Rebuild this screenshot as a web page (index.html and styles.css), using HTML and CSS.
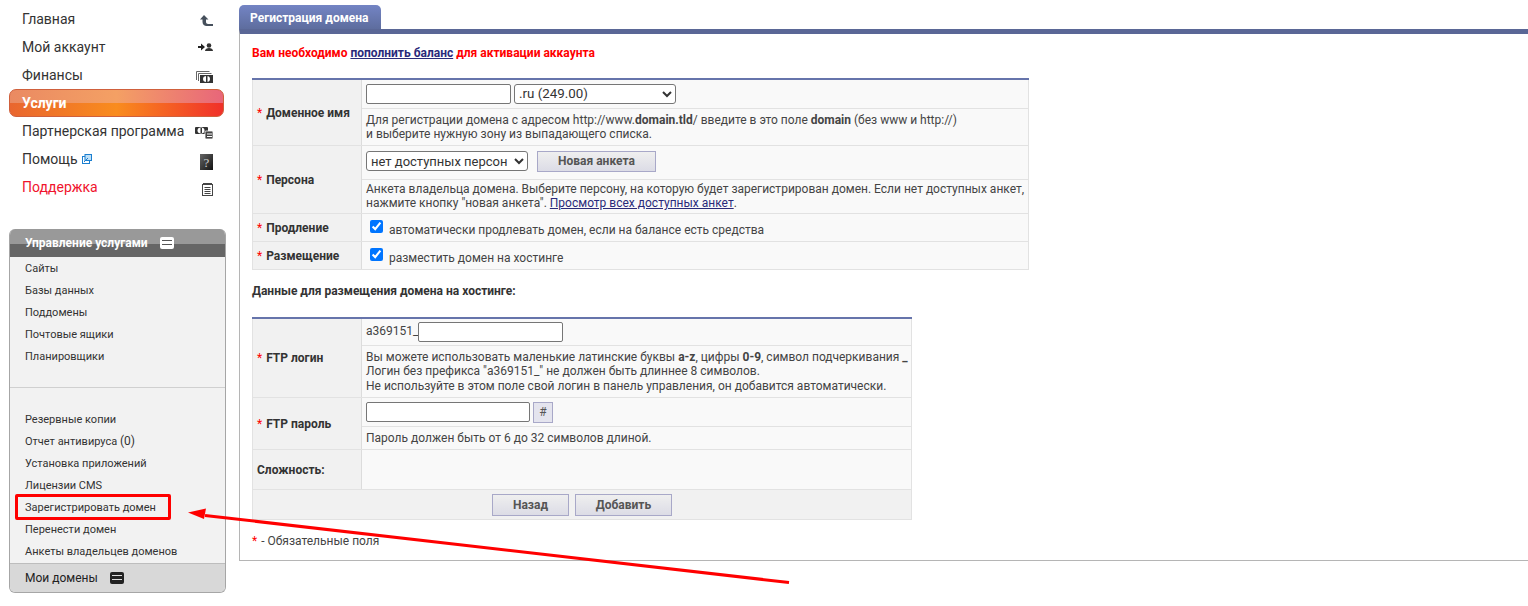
FILE: index.html
```html
<!DOCTYPE html>
<html lang="ru">
<head>
  <meta charset="UTF-8" />
  <title>Регистрация домена</title>
  <link rel="stylesheet" href="styles.css">
</head>
<body>
  <div class="page">
    <aside class="sidebar">
      <ul class="nav">
        <li class="nav-item"><a>Главная</a>
          <svg class="nav-icon icon-home" viewBox="0 0 13 11"><path d="M4 0 0 4.500h2.500V7c0 2.500 2 4 4 4H13V9H8C7 9 6 8 6 7V4.500h2.500z" fill="#46505c"/></svg></li>
        <li class="nav-item"><a>Мой аккаунт</a>
          <svg class="nav-icon icon-account" viewBox="0 0 15 8"><path d="M0 3h3V.5L7 4 3 7.500V5H0z" fill="#222"/><circle cx="11" cy="2.500" r="2.300" fill="#333"/><path d="M7 8c0-2 2-3 4-3s4 1 4 3z" fill="#333"/></svg></li>
        <li class="nav-item"><a>Финансы</a>
          <svg class="nav-icon icon-money" viewBox="0 0 17 12"><path d="M.5 9V.5h13M2.500 10V2.500h13" fill="none" stroke="#666"/><rect x="4" y="4" width="13" height="8" fill="#333"/><ellipse cx="10.500" cy="8" rx="3.500" ry="3" fill="#fff"/><rect x="10" y="5" width="1.500" height="6" fill="#333"/></svg></li>
        <li class="nav-item nav-item-active"><a>Услуги</a></li>
        <li class="nav-item"><a>Партнерская программа</a>
          <svg class="nav-icon icon-partner" viewBox="0 0 18 12"><rect x="0" y="0" width="13" height="7" rx="1" fill="#333"/><ellipse cx="6" cy="3.500" rx="3.500" ry="3" fill="#fff"/><rect x="5.500" y="1" width="1.500" height="5" fill="#333"/><rect x="10" y="4" width="8" height="8" rx="1" fill="#444" stroke="#fff" stroke-width=".8"/><path d="M12 7h5M12 9.500h5" stroke="#fff"/></svg></li>
        <li class="nav-item"><a>Помощь</a>
          <svg class="ext-icon" viewBox="0 0 10 10"><rect x=".5" y="2.500" width="7" height="7" fill="#fff" stroke="#1b7fd0"/><rect x="3" y=".5" width="6.500" height="6" fill="#bfe0f7" stroke="#1b7fd0"/><path d="M2 8 6 4" stroke="#1b7fd0"/></svg>
          <svg class="nav-icon icon-help" viewBox="0 0 13 16"><defs><linearGradient id="helpFill" x1="0" y1="0" x2="1" y2="1"><stop offset="0" stop-color="#666"/><stop offset="1" stop-color="#111"/></linearGradient></defs><rect width="13" height="16" fill="url(#helpFill)"/><text x="6.500" y="12.500" class="help-mark">?</text></svg></li>
        <li class="nav-item nav-item-red"><a>Поддержка</a>
          <svg class="nav-icon icon-note" viewBox="0 0 11 13"><rect x=".5" y="1.500" width="10" height="11" fill="#fff" stroke="#444"/><path d="M1 .5h9M2.500 4.500h6M2.500 6.500h6M2.500 8.500h6M2.500 10.500h6" stroke="#444"/></svg></li>
      </ul>

      <div class="panel">
        <div class="panel-head">Управление услугами
          <svg class="menu-icon" viewBox="0 0 14 12"><rect width="14" height="12" rx="2" fill="#fff"/><path d="M2 3.500h10M2 7.500h10" stroke="#555"/></svg>
        </div>
        <ul class="panel-list">
          <li>Сайты</li>
          <li>Базы данных</li>
          <li>Поддомены</li>
          <li>Почтовые ящики</li>
          <li>Планировщики</li>
        </ul>
        <ul class="panel-list panel-list-second">
          <li>Резервные копии</li>
          <li>Отчет антивируса <span class="count">(0)</span></li>
          <li>Установка приложений</li>
          <li>Лицензии CMS</li>
          <li>Зарегистрировать домен</li>
          <li>Перенести домен</li>
          <li>Анкеты владельцев доменов</li>
        </ul>
        <div class="panel-foot">Мои домены
          <svg class="menu-icon" viewBox="0 0 14 12"><rect width="14" height="12" rx="2" fill="#222"/><path d="M2 3.500h10M2 7.500h10" stroke="#ddd"/></svg>
        </div>
      </div>
    </aside>

    <main class="content">
      <div class="tab">Регистрация домена</div>
      <div class="box">
        <p class="alert">Вам необходимо <a class="link">пополнить баланс</a> для активации аккаунта</p>

        <table class="form form-domain">
          <tr class="row-tall">
            <th rowspan="2" class="label label-low"><span class="req">*</span> Доменное имя</th>
            <td><input class="text-input input-domain" type="text"><select class="select select-zone"><option>.ru (249.00)</option></select></td>
          </tr>
          <tr class="row-help2">
            <td class="help">Для регистрации домена с адресом http://www.<b>domain.tld</b>/ введите в это поле <b>domain</b> (без www и http://)<br>и выберите нужную зону из выпадающего списка.</td>
          </tr>
          <tr class="row-person">
            <th rowspan="2" class="label label-low"><span class="req">*</span> Персона</th>
            <td class="cell-person"><select class="select select-person"><option>нет доступных персон</option></select><button class="btn btn-new" type="button">Новая анкета</button></td>
          </tr>
          <tr class="row-help2b">
            <td class="help">Анкета владельца домена. Выберите персону, на которую будет зарегистрирован домен. Если нет доступных анкет,<br>нажмите кнопку "новая анкета". <a class="link">Просмотр всех доступных анкет</a>.</td>
          </tr>
          <tr class="row-check">
            <th class="label label-low"><span class="req">*</span> Продление</th>
            <td class="check-cell"><label class="check"><input type="checkbox" checked>автоматически продлевать домен, если на балансе есть средства</label></td>
          </tr>
          <tr class="row-check">
            <th class="label label-low"><span class="req">*</span> Размещение</th>
            <td class="check-cell"><label class="check"><input type="checkbox" checked>разместить домен на хостинге</label></td>
          </tr>
        </table>

        <h3 class="subtitle">Данные для размещения домена на хостинге:</h3>

        <table class="form form-ftp">
          <tr class="row-field">
            <th rowspan="2" class="label"><span class="req">*</span> FTP логин</th>
            <td class="plain">a369151_<input class="text-input input-login" type="text"></td>
          </tr>
          <tr class="row-help3">
            <td class="help help-wide">Вы можете использовать маленькие латинские буквы <b>a-z</b>, цифры <b>0-9</b>, символ подчеркивания <b>_</b><br>Логин без префикса "a369151_" не должен быть длиннее 8 символов.<br>Не используйте в этом поле свой логин в панель управления, он добавится автоматически.</td>
          </tr>
          <tr class="row-tall">
            <th rowspan="2" class="label"><span class="req">*</span> FTP пароль</th>
            <td><input class="text-input input-pass" type="text"><button class="btn btn-hash" type="button">#</button></td>
          </tr>
          <tr class="row-help1">
            <td class="help">Пароль должен быть от 6 до 32 символов длиной.</td>
          </tr>
          <tr class="row-strength">
            <th class="label">Сложность:</th>
            <td></td>
          </tr>
          <tr class="row-actions">
            <td colspan="2" class="actions"><button class="btn btn-action btn-back" type="button">Назад</button><button class="btn btn-action btn-add" type="button">Добавить</button></td>
          </tr>
        </table>

        <p class="note"><span class="req">*</span> - Обязательные поля</p>
      </div>
    </main>
  </div>

  <!-- annotation drawn over the screenshot -->
  <div class="mark-box"></div>
  <svg class="mark-arrow" width="1528" height="606" viewBox="0 0 1528 606">
    <path d="M789 582.500 205 515.500" stroke="#f00" stroke-width="3" fill="none"/>
    <path d="M188 512.500 206 508.500 204 519z" fill="#f00"/>
  </svg>
</body>
</html>
```

FILE: styles.css
```css
* {
  box-sizing: border-box;
}

html, body {
  margin: 0;
  background: #fff;
}

body {
  font-family: Roboto, 'Liberation Sans', sans-serif;
  font-size: 12px;
  color: #333;
  height: 606px;
  overflow: hidden;
}

.page {
  display: flex;
  align-items: flex-start;
}

/* sidebar */
.sidebar {
  width: 239px;
  flex: none;
  padding: 5px 0 0 9px;
}

.nav {
  list-style: none;
  margin: 0;
  padding: 0;
  width: 215px;
}

.nav-item {
  height: 28px;
  padding-left: 13px;
  padding-right: 11px;
  display: flex;
  align-items: center;
  font-size: 14px;
  color: #333;
}

.nav-icon {
  margin-left: auto;
  flex: none;
}

.icon-home {
  width: 13px;
  height: 11px;
  margin-top: 3px;
}

.icon-account {
  width: 15px;
  height: 8px;
}

.icon-money {
  width: 17px;
  height: 12px;
  margin-top: 3px;
}

.icon-partner {
  width: 18px;
  height: 12px;
  margin-top: 3px;
}

.icon-help {
  width: 13px;
  height: 16px;
  margin-top: 5px;
}

.icon-note {
  width: 11px;
  height: 13px;
  margin-top: 5px;
}

.help-mark {
  font-size: 13px;
  fill: #ccc;
  text-anchor: middle;
  font-family: 'Liberation Serif', serif;
}

.ext-icon {
  width: 10px;
  height: 10px;
  margin-left: 4px;
}

.nav-item-active {
  color: #fff;
  font-weight: 700;
  border: 1px solid #d0603c;
  border-radius: 7px;
  padding-left: 12px;
  background:
    linear-gradient(90deg, #ea8a62, #f4a064 50%, #e8667a) top / 100% 50% no-repeat,
    linear-gradient(90deg, #e9662f, #f98c1e 50%, #f0302a) bottom / 100% 50% no-repeat;
}

.nav-item-red {
  color: #f0142d;
}

/* services panel */
.panel {
  margin-top: 28px;
  width: 217px;
  height: 364px;
  border: 1px solid #a6a6a6;
  border-top: 0;
  border-radius: 6px;
  background: #f2f2f2;
  display: flex;
  flex-direction: column;
  overflow: hidden;
}

.panel-head {
  height: 28px;
  flex: none;
  padding: 0 0 0 15px;
  display: flex;
  align-items: center;
  color: #fff;
  font-weight: 700;
  background: linear-gradient(#999 0, #999 15px, #666 15px);
}

.menu-icon {
  width: 14px;
  height: 12px;
  margin-left: 12px;
}

.panel-list {
  list-style: none;
  margin: 0;
  padding: 1px 0 0 15px;
  font-size: 11px;
  color: #333;
  height: 131px;
  border-bottom: 1px solid #d0d0d0;
}

.panel-list li {
  height: 22px;
  line-height: 22px;
}

.panel-list-second {
  height: auto;
  border-bottom: 0;
  padding-top: 21px;
  flex: 1;
}

.count {
  font-size: 12px;
  line-height: 1;
}

.panel-foot {
  height: 29px;
  flex: none;
  padding-left: 15px;
  display: flex;
  align-items: center;
  background: #d8d8d8;
  border-top: 1px solid #bdbdbd;
  font-size: 12px;
  color: #222;
}

/* main box */
.content {
  flex: 1;
  padding-top: 5px;
  min-width: 0;
}

.tab {
  width: 142px;
  height: 24px;
  line-height: 26px;
  padding-left: 11px;
  color: #fff;
  font-weight: 700;
  font-size: 12px;
  border-radius: 5px 5px 0 0;
  background: linear-gradient(#7384c4, #5e6d9e);
}

.box {
  height: 532px;
  border-top: 5px solid #5a6796;
  border-left: 1px solid #b5b5b5;
  border-bottom: 1px solid #b5b5b5;
  padding: 0 0 0 12px;
}

.alert {
  margin: 12px 0 0;
  height: 15px;
  line-height: 15px;
  font-weight: 700;
  color: #f00;
}

.link {
  color: #2a2a7a;
  text-decoration: underline;
}

.form {
  border-collapse: collapse;
  border-top: 2px solid #6674ab;
  background: #f9f9f9;
  table-layout: fixed;
}

.form-domain {
  width: 777px;
  margin-top: 17px;
}

.form-ftp {
  width: 660px;
}

.form th,
.form td {
  border: 1px solid #e2e2e2;
  padding: 0 4px;
}

.form tr:first-child th,
.form tr:first-child td {
  border-top: 0;
}

.form th:first-child {
  width: 109px;
}

.form .label {
  background: #f1f1f1;
  text-align: left;
  border-right: 1px solid #dcdcdc;
  padding-right: 0;
  font-size: 12px;
  color: #333;
}

.form .label-low {
  padding-top: 2px;
}

.req {
  color: #f00;
  font-weight: 400;
  margin-right: 1px;
}

.row-field { height: 28px; }
.row-tall { height: 29px; }
.row-person { height: 34px; }
.row-help1 { height: 23px; }
.row-help2 { height: 37px; }
.row-help2b { height: 34px; }
.row-help3 { height: 52px; }
.row-check { height: 28px; }
.row-strength { height: 40px; }
.row-actions { height: 30px; }

.form .cell-person {
  padding-bottom: 2px;
}

.help {
  line-height: 14px;
  color: #444;
  white-space: nowrap;
}

.help-wide {
  line-height: 14.500px;
}

.plain {
  color: #444;
}

.text-input {
  height: 20px;
  border: 1px solid #767676;
  border-radius: 2px;
  padding: 1px 2px;
  background: #fff;
  vertical-align: middle;
  margin: 0;
}

.input-domain { width: 145px; }
.input-login { width: 145px; }
.input-pass { width: 164px; }

.select {
  height: 20px;
  font-family: Roboto, sans-serif;
  font-size: 13px;
  color: #333;
  border: 1px solid #767676;
  border-radius: 3px;
  background: #fff;
  vertical-align: middle;
  width: 162px;
}

.select-zone {
  margin-left: 3px;
  font-size: 13.330px;
}

.btn {
  font-family: Roboto, sans-serif;
  font-size: 12px;
  font-weight: 700;
  color: #555;
  border: 1px solid #a8a8c8;
  background: linear-gradient(#efefef, #dcdce6);
  vertical-align: middle;
  padding: 0;
  height: 21px;
}

.btn-new {
  width: 119px;
  margin-left: 9px;
}

.btn-hash {
  width: 20px;
  margin-left: 3px;
  font-weight: 400;
  background: #e4e4ee;
}

.form .check-cell {
  padding-left: 8px;
}

.check {
  display: flex;
  align-items: center;
  color: #444;
  padding-top: 5px;
}

.check input {
  margin: 0 6px 0 0;
  width: 13px;
  height: 13px;
  position: relative;
  top: -3px;
}

.subtitle {
  margin: 14px 0 0;
  height: 33px;
  font-size: 12px;
  font-weight: 700;
  color: #333;
}

.form .actions {
  background: #f1f1f1;
  text-align: center;
  padding: 0;
}

.btn-action {
  height: 22px;
}

.btn-back {
  width: 77px;
}

.btn-add {
  width: 97px;
  margin-left: 6px;
}

.note {
  margin: 14px 0 0;
  color: #444;
}

/* red annotation */
.mark-box {
  position: absolute;
  left: 15px;
  top: 494px;
  width: 156px;
  height: 26px;
  border: 3px solid #f00;
  border-radius: 2px;
}

.mark-arrow {
  position: absolute;
  left: 0;
  top: 0;
  pointer-events: none;
}
```
